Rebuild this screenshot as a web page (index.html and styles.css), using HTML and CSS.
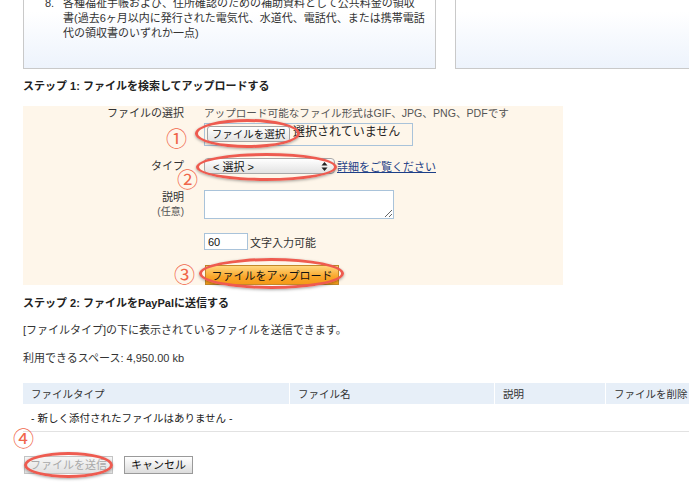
FILE: index.html
```html
<!DOCTYPE html>
<html lang="ja">
<head>
<meta charset="utf-8">
<title>アップロード</title>
<link rel="stylesheet" href="styles.css">
</head>
<body>
<div class="page">
  <div class="top-row">
    <div class="info-box">
      <div class="item"><span class="num">8.</span><span class="item-text">各種福祉手帳および、住所確認のための補助資料として公共料金の領収<br>書(過去6ヶ月以内に発行された電気代、水道代、電話代、または携帯電話<br>代の領収書のいずれか一点)</span></div>
    </div>
    <div class="info-box side"></div>
  </div>

  <h2 class="step">ステップ 1: ファイルを検索してアップロードする</h2>

  <div class="panel">
    <div class="row r1">
      <div class="label">ファイルの選択</div>
      <div class="value">
        <div class="hint">アップロード可能なファイル形式はGIF、JPG、PNG、PDFです</div>
        <div class="filebox"><span class="file-btn">ファイルを選択</span><span class="file-none">選択されていません</span></div>
      </div>
    </div>
    <div class="row r2">
      <div class="label">タイプ</div>
      <div class="value inline">
        <div class="select"><span>&lt; 選択 &gt;</span>
          <svg class="arrows" width="7" height="11" viewBox="0 0 7 11"><path d="M3.5 1 L6.5 4.5 L0.5 4.5 Z M3.5 10 L6.5 6.5 L0.5 6.5 Z" fill="#222"/></svg>
        </div>
        <a class="link" href="#">詳細をご覧ください</a>
      </div>
    </div>
    <div class="row r3">
      <div class="label">説明<br><span class="opt">(任意)</span></div>
      <div class="value"><textarea class="textarea"></textarea></div>
    </div>
    <div class="row r4">
      <div class="label"></div>
      <div class="value inline"><input class="count" type="text" value="60"><span class="count-text">文字入力可能</span></div>
    </div>
    <div class="row r5">
      <div class="label"></div>
      <div class="value"><button class="upload">ファイルをアップロード</button></div>
    </div>
  </div>

  <h2 class="step step2">ステップ 2: ファイルをPayPalに送信する</h2>
  <p class="para p1">[ファイルタイプ]の下に表示されているファイルを送信できます。</p>
  <p class="para p2">利用できるスペース: 4,950.00 kb</p>

  <table class="files">
    <thead>
      <tr><th class="c1">ファイルタイプ</th><th class="c2">ファイル名</th><th class="c3">説明</th><th class="c4">ファイルを削除</th></tr>
    </thead>
    <tbody>
      <tr><td colspan="4">- 新しく添付されたファイルはありません -</td></tr>
    </tbody>
  </table>

  <div class="actions">
    <button class="btn disabled">ファイルを送信</button>
    <button class="btn">キャンセル</button>
  </div>
</div>

<div class="ring e1"></div>
<div class="ring e2"></div>
<div class="ring e3"></div>
<div class="ring e4"></div>
<span class="mark m1">①</span>
<span class="mark m2">②</span>
<span class="mark m3">③</span>
<span class="mark m4">④</span>
</body>
</html>
```
FILE: styles.css
```css
html, body {
  margin: 0;
  padding: 0;
  background: #fff;
  overflow: hidden;
}
body {
  width: 689px;
  height: 488px;
  position: relative;
  font-family: "Liberation Sans", "Noto Sans CJK JP", sans-serif;
  font-size: 11px;
  color: #333;
}
.page {
  padding-left: 23px;
  width: 666px;
  overflow: hidden;
}
.top-row {
  display: flex;
  gap: 19px;
  margin-top: -20px;
}
.info-box {
  width: 413px;
  height: 89px;
  box-sizing: border-box;
  border: 1px solid #c9c9c9;
  background: linear-gradient(#ffffff 35%, #edf3fc);
  padding: 15px 0 0 21px;
  flex: none;
}
.info-box.side {
  width: 260px;
}
.item {
  display: flex;
  line-height: 15px;
  font-size: 11px;
  color: #333;
}
.num {
  width: 18px;
  flex: none;
}
.step {
  font-size: 11px;
  line-height: 14px;
  font-weight: bold;
  margin: 10px 0 13px;
  color: #222;
}
.panel {
  width: 540px;
  height: 179px;
  box-sizing: border-box;
  background: #fef6ea;
}
.row {
  display: flex;
}
.label {
  width: 161px;
  margin-right: 20px;
  text-align: right;
  line-height: 14px;
  flex: none;
}
.value.inline {
  display: flex;
  align-items: center;
}
.hint {
  line-height: 14px;
  color: #555;
  font-size: 10.6px;
}
.filebox {
  margin-top: 3px;
  width: 209px;
  height: 23px;
  box-sizing: border-box;
  border: 1px solid #a9c3da;
  display: flex;
  align-items: flex-start;
  padding: 2px 0 0 2px;
}
.file-btn {
  width: 83px;
  height: 16px;
  box-sizing: border-box;
  border: 1px solid #a5a5a5;
  border-radius: 3px;
  background: linear-gradient(#ffffff, #e4e4e4);
  font-size: 10.5px;
  line-height: 14px;
  text-align: center;
  color: #111;
}
.file-none {
  margin-left: 3px;
  font-size: 12px;
  line-height: 12px;
  color: #222;
}
.r2 {
  margin-top: 12px;
  align-items: center;
}
.select {
  width: 131px;
  height: 16px;
  box-sizing: border-box;
  border: 1px solid #a8a8a8;
  border-radius: 4px;
  background: linear-gradient(#ffffff, #e2e2e2);
  display: flex;
  align-items: center;
  justify-content: space-between;
  padding: 0 6px 0 8px;
  font-size: 11px;
  color: #111;
}
.arrows {
  display: block;
}
.link {
  margin-left: 2px;
  color: #1d3f87;
  text-decoration: underline;
  font-size: 11px;
}
.r3 {
  margin-top: 16px;
}
.opt {
  font-size: 10px;
  line-height: 16px;
  color: #555;
}
.textarea {
  display: block;
  width: 190px;
  height: 29px;
  box-sizing: border-box;
  border: 1px solid #a9c3da;
  margin: 0;
  padding: 2px;
  background: #fff;
}
.r4 {
  margin-top: 13px;
}
.count {
  width: 44px;
  height: 17px;
  box-sizing: border-box;
  border: 1px solid #a9c3da;
  margin: 0;
  padding: 0 3px;
  font-family: "Liberation Sans", sans-serif;
  font-size: 11px;
  color: #111;
}
.count-text {
  margin-left: 2px;
  font-size: 11px;
}
.r5 {
  margin-top: 15px;
}
.upload {
  margin: 0 0 0 1px;
  width: 134px;
  height: 20px;
  box-sizing: border-box;
  border: 1px solid #c1882a;
  background: linear-gradient(#ffd77e, #f9a62a 60%, #f59a18);
  font-family: "Liberation Sans", "Noto Sans CJK JP", sans-serif;
  font-size: 11px;
  color: #111;
  padding: 0;
}
.step2 {
  margin: 11px 0 0;
}
.para {
  margin: 0;
  line-height: 14px;
}
.p1 {
  margin-top: 13px;
}
.p2 {
  margin-top: 14px;
}
.files {
  margin-top: 18px;
  width: 690px;
  border-collapse: collapse;
  table-layout: fixed;
}
.files th {
  height: 21px;
  padding: 0 0 0 8px;
  background: #e7eff8;
  border-right: 1px solid #fff;
  text-align: left;
  font-weight: normal;
  font-size: 10.5px;
  color: #333;
  white-space: nowrap;
  overflow: hidden;
}
.files .c1 { width: 258px; }
.files .c2 { width: 196px; }
.files .c3 { width: 102px; }
.files .c4 { width: 102px; }
.files td {
  height: 27px;
  padding: 0 0 0 8px;
  border-bottom: 1px solid #e2e2e2;
  font-size: 10.5px;
  color: #222;
}
.actions {
  display: flex;
  gap: 11px;
  margin: 24px 0 0 1px;
}
.btn {
  height: 18px;
  box-sizing: border-box;
  border: 1px solid #9a9a9a;
  background: linear-gradient(#ffffff, #dcdcdc);
  font-family: "Liberation Sans", "Noto Sans CJK JP", sans-serif;
  font-size: 11px;
  line-height: 16px;
  color: #111;
  padding: 0 6px;
  margin: 0;
  white-space: nowrap;
}
.btn.disabled {
  width: 89px;
  padding: 0;
  color: #a9a9a9;
  border-color: #c4c4c4;
  background: linear-gradient(#f6f6f6, #e2e2e2);
}
.ring {
  position: absolute;
  box-sizing: border-box;
  border: 3px solid #ee5b50;
  border-radius: 50%;
  box-shadow: 0 1px 3px rgba(0, 0, 0, 0.35);
}
.e1 { left: 195px; top: 119px; width: 105px; height: 29px; }
.e2 { left: 196px; top: 153px; width: 141px; height: 28px; }
.e3 { left: 199px; top: 258px; width: 145px; height: 31px; }
.e4 { left: 24px; top: 452px; width: 89px; height: 26px; }
.mark {
  position: absolute;
  font-family: "Noto Sans CJK JP", sans-serif;
  font-size: 21px;
  line-height: 21px;
  color: #f0664a;
}
.m1 { left: 166px; top: 127px; }
.m2 { left: 177px; top: 168px; }
.m3 { left: 174px; top: 263px; }
.m4 { left: 13px; top: 427px; }
```
